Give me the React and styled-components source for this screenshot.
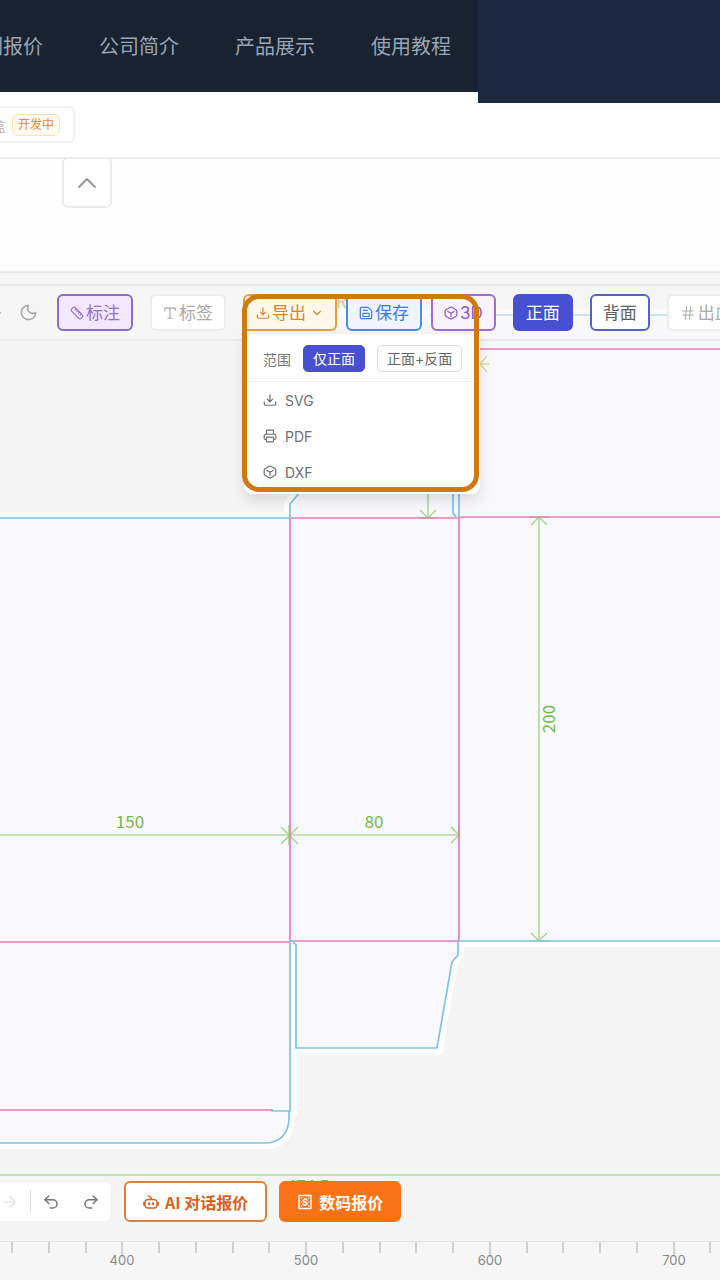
import React from "react";
import styled, { createGlobalStyle, css } from "styled-components";
import {
  ArrowRight,
  ChevronDown,
  ChevronUp,
  Hash,
  Moon,
  Printer,
  Redo2,
  Ruler,
  Sun,
  Undo2,
} from "lucide-react";

const GlobalStyle = createGlobalStyle`
  *, *::before, *::after { box-sizing: border-box; }
  html, body { margin: 0; padding: 0; }
  body {
    background: #f5f5f5;
    color: #666;
    font-family: Inter, "Noto Sans CJK SC", sans-serif;
    font-size: 14px;
    overflow-x: hidden;
  }
  button { font-family: inherit; margin: 0; cursor: pointer; }
`;

const Page = styled.div`
  display: flex;
  flex-direction: column;
  min-height: 100vh;
  overflow: hidden;
`;

/* ---------- header ---------- */

const Header = styled.header`
  position: relative;
  z-index: 1;
  display: flex;
  align-items: flex-start;
  height: 92px;
  background: #182230;
`;

const Nav = styled.nav`
  display: flex;
  flex: 2;
  align-items: center;
  gap: 56px;
  height: 92px;
  margin-left: -37px;
  padding-top: 1px;
  white-space: nowrap;
`;

const NavLink = styled.a`
  color: #9aa5b5;
  font-size: 20px;
  line-height: 28px;
  text-decoration: none;
`;

const AccountPanel = styled.div`
  flex: 0 0 242px;
  height: 103px;
  background: #1b2840;
`;

/* ---------- box type tabs ---------- */

const TypeBar = styled.div`
  display: flex;
  align-items: center;
  height: 67px;
  background: #fff;
  border-bottom: 2px solid #ececec;
`;

const TypeTab = styled.button`
  display: flex;
  align-items: center;
  gap: 6px;
  height: 37px;
  margin-left: -52px;
  padding: 0 13px 0 14px;
  background: #fff;
  border: 2px solid #f2f2f2;
  border-radius: 6px;
  color: #bbb;
  font-size: 14px;
`;

const Tag = styled.span`
  padding: 0 5px;
  background: #fffaf0;
  border: 1px solid #fbe3b0;
  border-radius: 6px;
  color: #dc8b45;
  font-size: 12px;
  line-height: 20px;
`;

const Drawer = styled.section`
  height: 114px;
  padding-left: 62px;
  background: #fefefe;
  border-bottom: 2px solid #e9e9e9;
`;

const CollapseButton = styled.button`
  display: grid;
  place-items: center;
  width: 50px;
  height: 51px;
  margin-top: -2px;
  background: #fff;
  border: 2px solid #ebebeb;
  border-radius: 6px;
  color: #999;
`;

/* ---------- workspace ---------- */

const Workspace = styled.main`
  display: grid;
  flex: 1;
  grid-template: minmax(0, 1fr) / minmax(0, 1fr);
  margin-top: 11px;
  border-top: 2px solid #e8e8e8;
`;

const Dieline = styled.svg`
  grid-area: 1 / 1;
  width: 100%;
  height: 100%;
  min-height: 0;
  background: #f5f5f5;
  font-family: "Noto Sans CJK SC", sans-serif;
  font-size: 17px;
`;

const Controls = styled.div`
  z-index: 1;
  display: flex;
  grid-area: 1 / 1;
  flex-direction: column;
  justify-content: space-between;
  min-height: 955px;
`;

const Toolbar = styled.div`
  display: flex;
  gap: 17px;
  padding: 8px 0;
  background: rgba(247, 247, 247, 0.5);
  border-bottom: 2px solid #e9e9e9;
  white-space: nowrap;
`;

const ThemeGroup = styled.div`
  display: flex;
  align-items: center;
  gap: 17px;
  margin-left: -16px;
  padding-right: 2px;
`;

const ToolGroup = styled.div`
  display: flex;
  gap: 9px;
`;

const IconButton = styled.button`
  display: grid;
  place-items: center;
  padding: 0;
  background: none;
  border: 0;
  color: ${(p) => p.$color || "#aaa"};
`;

const tones = {
  violet: css`background: #f2e8ff; border-color: #8d6cd0; color: #9570d0;`,
  violetSoft: css`background: #f8f3ff; border-color: #9d6bdd; color: #8a5ccc;`,
  plain: css`background: #fff; border-color: #ececec; color: #aaa;`,
  amber: css`background: #fff8ea; border-color: #e5a23c; color: #da8430;`,
  blue: css`background: #eef5ff; border-color: #4f8be6; color: #3f7bda;`,
  solid: css`background: #4650d0; border-color: #4650d0; color: #fff;`,
  outline: css`background: #fff; border-color: #5a60c8; color: #606060;`,
};

const ToolButton = styled.button`
  display: flex;
  align-items: center;
  gap: 2px;
  height: 37px;
  padding: 0 11px;
  border: 2px solid;
  border-radius: 6px;
  font-size: 17px;
  line-height: 24px;
  ${(p) => tones[p.$tone]}
`;

const ExportArea = styled.div`
  position: relative;
`;

const Caret = styled(ChevronDown)`
  margin-left: 2px;
`;

const ExportMenu = styled.div`
  position: absolute;
  z-index: 2;
  top: 39px;
  left: 1px;
  width: 236px;
  background: #fff;
  border-top: 1px solid #eee;
  border-radius: 0 0 8px 8px;
  box-shadow: 0 6px 14px rgba(0, 0, 0, 0.13);
`;

const ScopeRow = styled.div`
  display: flex;
  align-items: center;
  gap: 12px;
  height: 48px;
  padding: 2px 18px 0 19px;
  border-bottom: 1px solid #eee;
  color: #777;
`;

const ScopeButton = styled.button`
  height: 27px;
  padding: 0 9px;
  background: ${(p) => (p.$active ? "#4650d0" : "#fff")};
  border: 1px solid ${(p) => (p.$active ? "#4650d0" : "#ddd")};
  border-radius: 5px;
  color: ${(p) => (p.$active ? "#fff" : "#666")};
  font-size: 14px;
  line-height: 20px;
`;

const FormatList = styled.div`
  display: flex;
  flex-direction: column;
  padding-bottom: 4px;
`;

const FormatButton = styled.button`
  display: flex;
  align-items: center;
  gap: 8px;
  height: 36px;
  padding: 0 19px;
  background: none;
  border: 0;
  color: #707070;
  font-size: 14px;
  text-align: left;
`;

const FocusFrame = styled.div`
  position: absolute;
  z-index: 3;
  top: 0;
  left: -1px;
  width: 237px;
  height: 198px;
  border: 5px solid #d17a0c;
  border-radius: 17px;
  pointer-events: none;
`;

const ActionBar = styled.div`
  display: flex;
  gap: 12px;
  margin-bottom: 19px;
  white-space: nowrap;
`;

const HistoryGroup = styled.div`
  display: flex;
  align-items: center;
  gap: 22px;
  height: 41px;
  margin-left: -10px;
  padding: 0 11px 0 10px;
  background: #fff;
  border: 1px solid #efefef;
  border-radius: 6px;
`;

const StepGroup = styled.div`
  display: flex;
  align-items: center;
  height: 23px;
  margin-right: -11px;
  padding-right: 11px;
  border-right: 1px solid #ddd;
`;

const QuoteButton = styled.button`
  display: flex;
  align-items: center;
  gap: 6px;
  height: 41px;
  padding: 0 ${(p) => (p.$solid ? 16 : 17)}px;
  background: ${(p) => (p.$solid ? "#fa7216" : "#fff")};
  border: 2px solid ${(p) => (p.$solid ? "#fa7216" : "#e07e42")};
  border-radius: 6px;
  color: ${(p) => (p.$solid ? "#fff" : "#dc5e20")};
  font-family: "Noto Sans CJK SC", sans-serif;
  font-size: 16px;
  font-weight: 700;
  line-height: 24px;
`;

const RulerScale = styled.svg`
  display: block;
  width: 100%;
  height: 39px;
  background: #f6f6f6;
  border-top: 1px solid #e2e2e2;
  font-size: 13px;
`;

/* ---------- icons ---------- */

const Glyph = styled.svg.attrs({
  viewBox: "0 0 16 16",
  fill: "none",
  stroke: "currentColor",
  strokeLinecap: "round",
  strokeLinejoin: "round",
  "aria-hidden": true,
})`
  flex: none;
  width: ${(p) => p.$size || 14}px;
  height: ${(p) => p.$size || 14}px;
  stroke-width: 1.4px;
`;

const TrayIcon = () => (
  <Glyph>
    <path d="M8 2v8M5 7l3 3 3-3M1.5 10v2.5A1.5 1.5 0 0 0 3 14h10a1.5 1.5 0 0 0 1.5-1.5V10" />
  </Glyph>
);

const CubeIcon = () => (
  <Glyph>
    <path d="M7 1.5 2.3 4.2A2 2 0 0 0 1.3 5.9v4.2a2 2 0 0 0 1 1.7L7 14.5a2 2 0 0 0 2 0l4.7-2.7a2 2 0 0 0 1-1.7V5.9a2 2 0 0 0-1-1.7L9 1.5a2 2 0 0 0-2 0Z" />
    <path d="M4.5 6.2 8 8.2l3.5-2M8 8.2v3.6" />
  </Glyph>
);

const DiskIcon = () => (
  <Glyph>
    <path d="M3 1.5h7.5l4 4V13a1.5 1.5 0 0 1-1.5 1.5H3A1.5 1.5 0 0 1 1.5 13V3A1.5 1.5 0 0 1 3 1.5Z" />
    <path d="M5 5h4.500M4.500 8.500h7v3.500h-7z" />
  </Glyph>
);

const LabelIcon = () => (
  <Glyph>
    <path d="M2 5V2.5h12V5M8 2.5V14M5.5 14h5" />
  </Glyph>
);

const RobotIcon = () => (
  <Glyph $size={16}>
    <path d="M5 5.500h6a3 3 0 0 1 3 3V11a3 3 0 0 1-3 3H5a3 3 0 0 1-3-3V8.500a3 3 0 0 1 3-3ZM8.500 5.500C8.500 3.500 7.500 2.500 5.500 1.800M.800 8.500v2.500M15.200 8.500v2.500" />
    <path d="M6 9.300v1M10 9.300v1" strokeWidth="2" />
  </Glyph>
);

const BillIcon = () => (
  <Glyph $size={16}>
    <path d="M2 1.500h12v13H2z" />
    <path d="M4.300 4v.1M4.300 8v.1M4.300 12v.1M11.800 4v.1M11.800 8v.1M11.800 12v.1" />
    <path
      d="M10 6C9.500 4.800 6.200 4.700 6.200 6.500 6.200 8.400 9.900 7.600 9.900 9.500c0 1.900-3.300 1.800-3.900.6"
      strokeWidth="1.800"
    />
  </Glyph>
);

/* ---------- drawing ---------- */

const cut = { stroke: "#7cc5e6", strokeWidth: 1.7, fill: "none" };
const crease = { stroke: "#e37fb7", strokeWidth: 1.7, fill: "none" };
const measure = { stroke: "#b5da9c", strokeWidth: 1.7, fill: "none" };
const arrow = { stroke: "#a9d289", strokeWidth: 1.4, fill: "none" };

const SHEET =
  "M-20 518H290V504L300 492V315H2000V941H458V954L452 962L437 1048H296V944L291 941V1110H289V1120Q287 1143 264 1143H-20Z";

function DielineDrawing() {
  return (
    <Dieline role="img" aria-label="盒型展开图">
      <g transform="translate(0 -286)">
        <path d={SHEET} fill="#f8f8fd" stroke="#fff" strokeWidth="12" />
        <path d={SHEET} fill="#f8f8fd" />

        <path {...measure} d="M0 835H460M539 517V941M428 480V518M0 1175H2000" />
        <path
          {...arrow}
          d="M281 827l17 17M298 827l-17 17M289 825v20M451 827l8 8-8 8M459 825v20"
        />
        <path
          {...arrow}
          d="M531 525l8-8 8 8M529 517h20M531 933l8 8 8-8M529 941h20M420 510l8 8 8-8M418 518h20"
        />
        <path {...arrow} stroke="#d4dfa0" d="M472 372l8-8-8-8M487 356l-7 8 7 8M480 364h9" />

        <path {...crease} d="M290 518V941M459 517V941M290 518H459M459 517H2000" />
        <path {...crease} d="M0 942H290M290 941H459M0 1110H273M480 349H2000" />

        <path {...cut} d="M0 518H290V504L300 492M453 480V513L456 517M459 480V517" />
        <path {...cut} d="M430 315H2000M459 941H2000" />
        <path {...cut} d="M290 941V1111H272V1109M289 1111V1120Q287 1143 264 1143H0" />
        <path {...cut} d="M290 941H293L296 945V1048H437L452 962L458 955V941" />

        <g fill="#74b846" textAnchor="middle">
          <text x="130" y="828">150</text>
          <text x="374" y="828">80</text>
          <text transform="translate(555 719) rotate(-90)">200</text>
          <text x="346" y="308">R5</text>
          <text x="308" y="1192">474.5</text>
        </g>
      </g>
    </Dieline>
  );
}

const TICKS = Array.from({ length: 55 }, (_, i) => ({
  x: Math.round(12 + i * 36.75),
  label: i % 5 === 3 ? String(400 + ((i - 3) / 5) * 100) : null,
}));

function BottomRuler() {
  return (
    <RulerScale role="img" aria-label="标尺">
      {TICKS.map(({ x, label }) => (
        <g key={x}>
          <path d={`M${x} 0v${label ? 15 : 11}`} stroke="#cfcfcf" strokeWidth="2" />
          {label && (
            <text x={x} y="23" textAnchor="middle" fill="#888">
              {label}
            </text>
          )}
        </g>
      ))}
    </RulerScale>
  );
}

export default function App() {
  return (
    <>
      <GlobalStyle />
      <Page>
        <Header>
          <Nav>
            {["印刷报价", "公司简介", "产品展示", "使用教程"].map((name) => (
              <NavLink href="#" key={name}>
                {name}
              </NavLink>
            ))}
          </Nav>
          <AccountPanel />
        </Header>

        <TypeBar>
          <TypeTab>
            天地盒 <Tag>开发中</Tag>
          </TypeTab>
        </TypeBar>
        <Drawer>
          <CollapseButton aria-label="收起">
            <ChevronUp size={32} strokeWidth={1.5} />
          </CollapseButton>
        </Drawer>

        <Workspace>
          <DielineDrawing />
          <Controls>
            <Toolbar>
              <ThemeGroup>
                <IconButton aria-label="浅色">
                  <Sun size={18} />
                </IconButton>
                <IconButton aria-label="深色">
                  <Moon size={19} />
                </IconButton>
              </ThemeGroup>
              <ToolButton $tone="violet">
                <Ruler size={14} />
                标注
              </ToolButton>
              <ToolButton $tone="plain">
                <LabelIcon />
                标签
              </ToolButton>
              <ToolGroup>
                <ExportArea>
                  <ToolButton $tone="amber" aria-expanded="true">
                    <TrayIcon />
                    导出
                    <Caret size={14} />
                  </ToolButton>
                  <ExportMenu>
                    <ScopeRow>
                      范围
                      <ScopeButton $active>仅正面</ScopeButton>
                      <ScopeButton>正面+反面</ScopeButton>
                    </ScopeRow>
                    <FormatList>
                      <FormatButton>
                        <TrayIcon />
                        SVG
                      </FormatButton>
                      <FormatButton>
                        <Printer size={14} />
                        PDF
                      </FormatButton>
                      <FormatButton>
                        <CubeIcon />
                        DXF
                      </FormatButton>
                    </FormatList>
                  </ExportMenu>
                  <FocusFrame />
                </ExportArea>
                <ToolButton $tone="blue">
                  <DiskIcon />
                  保存
                </ToolButton>
                <ToolButton $tone="violetSoft">
                  <CubeIcon />
                  3D
                </ToolButton>
              </ToolGroup>
              <ToolButton $tone="solid">正面</ToolButton>
              <ToolButton $tone="outline">背面</ToolButton>
              <ToolButton $tone="plain">
                <Hash size={16} strokeWidth={1.5} />
                出血
              </ToolButton>
            </Toolbar>

            <ActionBar>
              <HistoryGroup>
                <StepGroup>
                  <IconButton aria-label="下一步" $color="#ddd">
                    <ArrowRight size={18} strokeWidth={1.5} />
                  </IconButton>
                </StepGroup>
                <IconButton aria-label="撤销" $color="#777">
                  <Undo2 size={18} />
                </IconButton>
                <IconButton aria-label="重做" $color="#777">
                  <Redo2 size={18} />
                </IconButton>
              </HistoryGroup>
              <QuoteButton>
                <RobotIcon />
                AI 对话报价
              </QuoteButton>
              <QuoteButton $solid>
                <BillIcon />
                数码报价
              </QuoteButton>
            </ActionBar>
          </Controls>
        </Workspace>
        <BottomRuler />
      </Page>
    </>
  );
}
